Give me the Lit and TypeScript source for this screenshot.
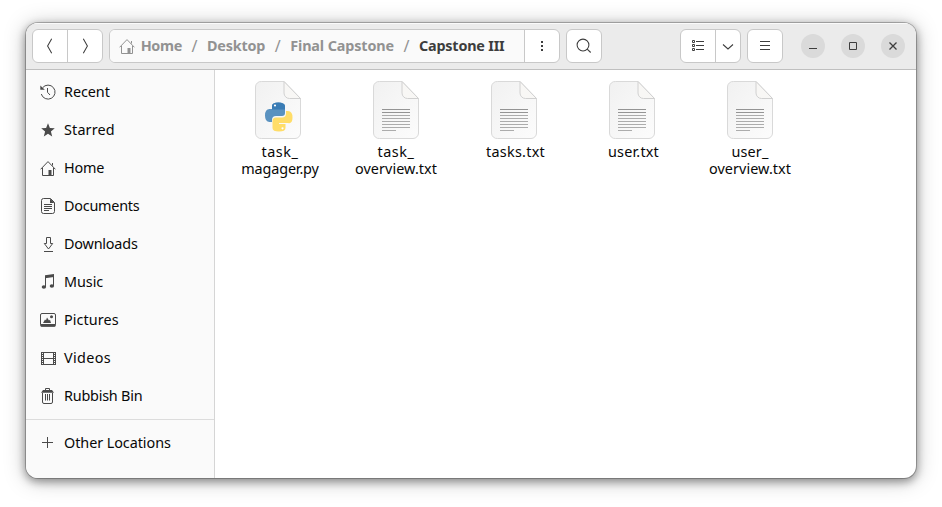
import { LitElement, html, css, svg, nothing } from "lit";
import { customElement, property } from "lit/decorators.js";

/** A line of text tracked out (or in) to a given width. */
@customElement("fit-label")
export class FitLabel extends LitElement {
  @property({ type: String }) text = "";
  @property({ type: Number }) width = 0;

  static styles = css`
    :host { display: block; white-space: nowrap; }
    .t { display: inline-block; }
  `;

  firstUpdated() {
    const t = this.renderRoot.querySelector(".t") as HTMLElement;
    const natural = t.getBoundingClientRect().width;
    const step = (this.width - natural) / this.text.length;
    t.style.letterSpacing = `${step.toFixed(3)}px`;
  }

  render() {
    return html`<span class="t">${this.text}</span>`;
  }
}

const home = svg`<path d="M.6 9.3 8 1.6l7.400 7.700M2.500 8v7.500h11V8M12.500 5.500V3"/><path class="f" d="M8.500 10h3v5h-3z"/>`;

const icons: Record<string, unknown> = {
  recent: svg`<path d="M1.300 10A7 7 0 1 0 2.600 3.700M7.500 4v4.300l2.500 2.700"/><path class="f" d="M.3 1.500v4.300h4.500z"/>`,
  starred: svg`<path class="f" d="M8 1.200 9.900 6l4.900.3-3.900 3.200 1.300 5L8 11.700l-4.200 2.800 1.300-5L1.200 6.300 6.100 6z"/>`,
  home,
  documents: svg`<path d="M3.500.5h7l4 4v9a2 2 0 0 1-2 2h-9a2 2 0 0 1-2-2v-11a2 2 0 0 1 2-2zM4 6.500h8M4 8.500h8M4 10.500h8M4 12.500h5"/><path class="f" d="M10 .5v4.500h4.500z"/>`,
  downloads: svg`<path d="M6.500 1.500h4v6h2.200L8.500 13 4.300 7.500h2.200zM4 15.500h9"/>`,
  music: svg`<path class="f" d="M5 1.200 14 0v3L5 4.200z"/><path d="M5.500 2v11M13.500 1v11"/><ellipse class="f" cx="3.900" cy="13" rx="2.200" ry="1.800"/><ellipse class="f" cx="11.900" cy="12" rx="2.200" ry="1.800"/>`,
  pictures: svg`<rect x=".5" y="1.500" width="15" height="12.500" rx="1.500"/><path class="f" d="M.5 12h15v1.500a1 1 0 0 1-1 1.200h-13a1 1 0 0 1-1-1.200zM3 11l2-3.500 1 .8L7 5.500l2 3 1-.8L11 11z"/><circle class="f" cx="11.500" cy="4.800" r="1.500"/>`,
  videos: svg`<path d="M1.500 2v13M15.500 2v13M3.500 2v13M13.500 2v13M3.500 2.500h10M3.500 8.500h10M3.500 14.500h10"/><path class="holes" d="M2.500 2v13M14.500 2v13"/>`,
  bin: svg`<path d="M5.500 2V.5h4V2M2.500 5v9a1.500 1.500 0 0 0 1.500 1.500h7a1.500 1.500 0 0 0 1.500-1.500V5M5.500 6v6.500M7.500 6v6.500M9.500 6v6.500"/><path class="f" d="M3 2h9l2 2.800H1z"/>`,
  plus: svg`<path d="M7.500 2v11M2 7.500h11"/>`,
  back: svg`<path class="b" d="M9.700.7 5.600 8l4.100 7.300"/>`,
  forward: svg`<path class="b" d="M6.300.7 10.400 8l-4.100 7.300"/>`,
  dots: svg`<path class="f" d="M7 3h2v2H7zM7 7h2v2H7zM7 11h2v2H7z"/>`,
  search: svg`<circle class="b" cx="7" cy="7" r="5.900"/><path class="b" d="m11.200 11.200 3.500 3.300"/>`,
  list: svg`<path d="M2.500 2.500h2v2h-2zM2.500 6.500h2v2h-2zM2.500 10.500h2v2h-2zM6 3.500h8M6 7.500h8M6 11.500h8"/>`,
  down: svg`<path class="b" d="m3 6.500 5 4.500 5-4.500"/>`,
  menu: svg`<path d="M3 3.500h10M3 7.500h10M3 11.500h10"/>`,
  minimize: svg`<path d="M4 10.500h8"/>`,
  maximize: svg`<path d="M4.500 4.500h7v7h-7z"/>`,
  close: svg`<path class="x" d="m4.500 4.500 7 7m0-7-7 7"/>`,
};

const icon = (name: string) =>
  html`<svg class="icon" viewBox="0 0 16 16" width="16" height="16">${icons[name]}</svg>`;

const places: [string, string, number][] = [
  ["recent", "Recent", 45.8],
  ["starred", "Starred", 50.8],
  ["home", "Home", 40.3],
  ["documents", "Documents", 75.5],
  ["downloads", "Downloads", 73.6],
  ["music", "Music", 39.2],
  ["pictures", "Pictures", 54.8],
  ["videos", "Videos", 47],
  ["bin", "Rubbish Bin", 78.4],
];

const crumbs: [string, number][] = [
  ["Home", 41.3],
  ["Desktop", 58.2],
  ["Final Capstone", 103.8],
  ["Capstone III", 85.5],
];

type Line = [text: string, width: number, shift?: string];

const files: { kind: "py" | "txt"; lines: Line[] }[] = [
  { kind: "py", lines: [["task_", 37], ["magager.py", 77.5]] },
  { kind: "txt", lines: [["task_", 37, "left"], ["overview.txt", 82, "left"]] },
  { kind: "txt", lines: [["tasks.txt", 59, "mid"]] },
  { kind: "txt", lines: [["user.txt", 51, "mid"]] },
  { kind: "txt", lines: [["user_", 37, "left"], ["overview.txt", 82, "left"]] },
];

const textLines = svg`
  <path d="M9 28.500h28M9 31.500h28" stroke="#949494"/>
  <path d="M9 34.500h28M9 37.500h28M9 40.500h28M9 43.500h28M9 46.500h28M9 49.500h14" stroke="#acacac"/>`;

const python = svg`
  <path fill="#5a92c0" d="M17 25q0-3.500 6.300-3.500T30 25v7q0 3-3 3h-6q-4 0-4 4v2h-2.500q-4.500 0-4.500-6.500t4.500-6.500H24v-1h-7z"/>
  <path fill="#3a7cb5" d="M17 25q0-3.500 6.300-3.500T30 25v3.500H17z"/>
  <path fill="#ffdd68" d="M31 30h2q4.500 0 4.500 6.500T33 42h-9v1h6.500v4q0 3.500-6.500 3.500T17.500 47v-7q0-3.500 3.500-3.500h6q4 0 4-4z"/>
  <circle cx="20" cy="24.500" r="1.100" fill="#fff"/><circle cx="27.500" cy="47.300" r="1.100" fill="#fff"/>`;

@customElement("app-root")
export class AppRoot extends LitElement {
  static styles = css`
    :host {
      display: block;
      box-sizing: border-box;
      height: 507px;
      padding: 23px 26px 29px;
      overflow: hidden;
      background: #fff;
      font: 14.4px/20px "Noto Sans", "Open Sans", sans-serif;
      color: #080808;
    }
    .window {
      display: flex;
      flex-direction: column;
      height: 455px;
      border-radius: 12px;
      overflow: hidden;
      background: #fff;
      box-shadow: 0 0 0 1px rgba(0, 0, 0, 0.23), 0 3px 9px 1px rgba(0, 0, 0, 0.36), 0 2px 22px rgba(0, 0, 0, 0.25);
    }
    .header {
      display: flex;
      flex: none;
      box-sizing: border-box;
      height: 47px;
      padding: 6px 11px 6px 6px;
      background: #ebebeb;
      border-bottom: 1px solid #bfbfbf;
      box-shadow: inset 0 1px #fafafa;
    }
    .group {
      display: flex;
      box-sizing: border-box;
      height: 34px;
      border: 1px solid #c8c8c8;
      border-radius: 6px;
      background: #fff;
      overflow: hidden;
    }
    .cell { display: flex; align-items: center; justify-content: center; width: 34px; }
    .cell + .cell, .path + .cell { border-left: 1px solid #c8c8c8; }
    .slim { width: 24px; }
    .nav, .pathbar { margin-right: 6px; }
    .pathbar { width: 451px; }
    .nav { width: 71px; }
    .path {
      display: flex;
      flex: 1;
      align-items: center;
      padding-left: 9px;
      background: #fafafa;
      color: #929292;
      font-weight: 700;
      --ink: #929292;
    }
    .path .icon { margin-right: 5.700px; }
    .slash { width: 25px; text-align: center; font-weight: 400; font-size: 16px; }
    .current { color: #3d3d3d; }
    .spacer { flex: 1; }
    .view { margin-right: 6px; }
    .controls { display: flex; align-items: center; gap: 16px; margin-left: 18px; }
    .control {
      display: flex;
      align-items: center;
      justify-content: center;
      width: 24px;
      height: 24px;
      border-radius: 50%;
      background: #dadada;
    }
    .body { display: flex; flex: 1; min-height: 0; }
    .sidebar {
      box-sizing: border-box;
      width: 189px;
      padding-top: 3px;
      background: #fafafa;
      border-right: 1px solid #d5d5d5;
    }
    .place { display: flex; align-items: center; height: 38px; padding-left: 14px; gap: 8px; --ink: #4a4a4a; }
    .rule { height: 1px; margin: 4px 0; background: #dcdcdc; }
    .files { display: flex; align-items: flex-start; padding: 11px 0 0 5px; }
    .file { display: flex; flex-direction: column; align-items: center; width: 118px; line-height: 17px; }
    .page { display: block; margin-bottom: 2px; }
    .name { margin-left: 2px; }
    .mid { margin-left: 1px; }
    .left { margin-left: -2px; }
    .icon { display: block; flex: none; fill: none; stroke: var(--ink, #3d3d3d); stroke-width: 1; }
    .icon .f { fill: var(--ink, #3d3d3d); stroke: none; }
    .icon .b { stroke-width: 1.05; }
    .icon .x { stroke-width: 1.3; }
    .icon .holes { stroke-dasharray: 1 1; }
  `;

  private cell(name: string, extra = "") {
    return html`<div class="cell ${extra}">${icon(name)}</div>`;
  }

  private place(name: string, label: string, width: number) {
    return html`<div class="place">${icon(name)}<fit-label .text=${label} .width=${width}></fit-label></div>`;
  }

  private page(kind: string) {
    return html`<svg class="page" width="48" height="60" viewBox="0 0 48 60">
      <defs>
        <linearGradient id="paper" x1="0" y1="0" x2="1" y2="1">
          <stop offset="0" stop-color="#f1f1f1" /><stop offset="1" stop-color="#fcfcfc" />
        </linearGradient>
      </defs>
      <path d="M6.500.5h22.500l16.500 17v34.500a5.500 5.500 0 0 1-5.500 5.500h-33.500a5.500 5.500 0 0 1-6-5.500v-46a5.500 5.500 0 0 1 6-5.500z" fill="url(#paper)" stroke="#d9d9d9" />
      <path d="M29 .5v11.500a5.500 5.500 0 0 0 5.500 5.500h11z" fill="#f8f7f5" stroke="#d0d0d0" />
      ${kind === "py" ? python : textLines}
    </svg>`;
  }

  render() {
    return html`<div class="window">
      <div class="header">
        <div class="group nav">${this.cell("back")}${this.cell("forward")}</div>
        <div class="group pathbar">
          <div class="path">
            ${icon("home")}
            ${crumbs.map(([text, width], i) => html`
              ${i ? html`<span class="slash">/</span>` : nothing}
              <fit-label class=${i === 3 ? "current" : ""} .text=${text} .width=${width}></fit-label>`)}
          </div>
          ${this.cell("dots")}
        </div>
        <div class="group">${this.cell("search")}</div>
        <div class="spacer"></div>
        <div class="group view">${this.cell("list")}${this.cell("down", "slim")}</div>
        <div class="group">${this.cell("menu")}</div>
        <div class="controls">
          ${["minimize", "maximize", "close"].map((n) => html`<div class="control">${icon(n)}</div>`)}
        </div>
      </div>
      <div class="body">
        <div class="sidebar">
          ${places.map(([n, l, w]) => this.place(n, l, w))}
          <div class="rule"></div>
          ${this.place("plus", "Other Locations", 106.8)}
        </div>
        <div class="files">
          ${files.map((f) => html`<div class="file">
            ${this.page(f.kind)}
            ${f.lines.map(([t, w, s]) => html`<fit-label class="name ${s ?? ""}" .text=${t} .width=${w}></fit-label>`)}
          </div>`)}
        </div>
      </div>
    </div>`;
  }
}
